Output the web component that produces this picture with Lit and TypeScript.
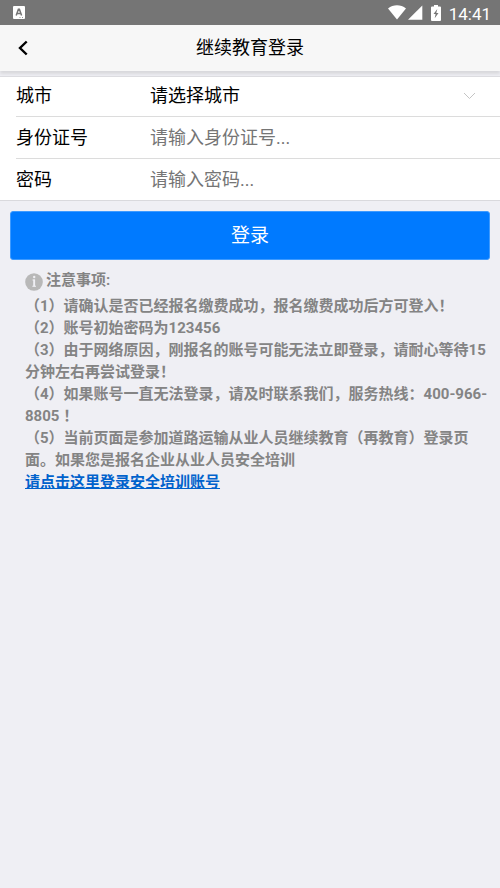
import { LitElement, html, css } from "lit";
import { customElement, state } from "lit/decorators.js";

@customElement("app-root")
export class AppRoot extends LitElement {
  static styles = css`
    :host {
      display: block;
      min-height: 100vh;
      background: #efeff4;
      color: #000;
      font-family: Roboto, "Noto Sans CJK SC", sans-serif;
      font-size: 18px;
      line-height: 22px;
    }
    .status {
      display: flex;
      align-items: center;
      justify-content: space-between;
      height: 25px;
      padding: 0 9px 0 13px;
      background: #757575;
      color: #fff;
    }
    .status svg {
      display: block;
    }
    .indicators {
      display: flex;
      align-items: center;
    }
    .battery {
      margin-left: 8px;
    }
    .time {
      margin-left: 8px;
      padding-top: 2px;
      font-size: 17px;
    }
    .bar {
      display: grid;
      grid-template-columns: 46px 1fr 46px;
      align-items: center;
      height: 46px;
      background: #f7f7f7;
      box-shadow: 0 3px 3px #d8d8dc;
    }
    .back {
      display: flex;
      justify-content: center;
      align-items: center;
      height: 46px;
      padding: 0;
      border: 0;
      background: none;
      color: #000;
    }
    .title {
      margin: 0;
      font-size: 18px;
      font-weight: 400;
      text-align: center;
    }
    .fields {
      position: relative;
      margin-top: 5px;
      border-top: 1px solid #dcdce0;
      border-bottom: 1px solid #d9d9dd;
      background: #fff;
    }
    .row {
      display: flex;
      align-items: center;
      height: 41px;
      margin-left: 16px;
    }
    .row + .row {
      border-top: 1px solid #dcdcdc;
    }
    .row:first-child {
      height: 37px;
      padding-bottom: 2px;
    }
    .label {
      width: 134px;
      flex: none;
    }
    .control {
      flex: 1;
      min-width: 0;
      height: 36px;
      margin: 0;
      padding: 0;
      border: 0;
      outline: 0;
      appearance: none;
      background: none;
      color: #000;
      font: inherit;
    }
    .control::placeholder {
      color: #757575;
      opacity: 1;
    }
    .arrow {
      flex: none;
      margin-right: 24px;
      pointer-events: none;
    }
    .submit {
      display: block;
      width: calc(100% - 20px);
      height: 49px;
      margin: 10px 10px 0;
      padding: 0 0 4px;
      border: 1px solid #3d9aff;
      border-radius: 3px;
      background: #007aff;
      color: #fff;
      font-family: inherit;
      font-size: 19px;
    }
    .notes {
      padding: 8px 10px 0 25px;
      color: #848484;
      font-size: 15px;
      font-weight: 700;
    }
    .heading {
      display: flex;
      align-items: center;
      gap: 3px;
      height: 24px;
      margin: 0;
      padding-bottom: 3px;
      font-size: 15px;
    }
    .info {
      flex: none;
      margin-top: 4px;
    }
    .notes p {
      margin: 0;
    }
    .link {
      color: #0062cc;
    }
  `;

  @state() private city = "";

  private notices = [
    "（1）请确认是否已经报名缴费成功，报名缴费成功后方可登入！",
    "（2）账号初始密码为123456",
    "（3）由于网络原因，刚报名的账号可能无法立即登录，请耐心等待15分钟左右再尝试登录！",
    "（4）如果账号一直无法登录，请及时联系我们，服务热线：400-966-8805 ！",
    "（5）当前页面是参加道路运输从业人员继续教育（再教育）登录页面。如果您是报名企业从业人员安全培训",
  ];

  render() {
    return html`
      <div class="status">
        <svg width="12" height="13" viewBox="0 0 12 13" aria-hidden="true">
          <rect width="12" height="13" rx="1" fill="#fff" />
          <path d="M3.200 9.500 5.400 3.200H6.400L8.600 9.500M4 7.400H7.800" fill="none" stroke="#757575" stroke-width="1.500" />
          <path d="M6.500 11.500h1M9 11.500h1" stroke="#999" />
        </svg>
        <div class="indicators">
          <svg width="35" height="15" viewBox="0 0 35 15" fill="#fff" aria-hidden="true">
            <path d="M0 3.400C5.200-.9 12.800-.9 18 3.400L9 14.500Z" />
            <path d="M34.300.5V14.800H20Z" />
          </svg>
          <svg class="battery" width="10" height="16" viewBox="0 0 10 16" aria-hidden="true">
            <path d="M3 0h4v1.500h2q1 0 1 1V15q0 1-1 1H1q-1 0-1-1V2.500q0-1 1-1h2Z" fill="#fff" />
            <path d="M6.300 4 2.500 9h2.100L3.700 13.200 7.500 8H5.300Z" fill="#757575" />
          </svg>
          <span class="time">14:41</span>
        </div>
      </div>
      <header class="bar">
        <button class="back" type="button" aria-label="返回">
          <svg width="10" height="16" viewBox="0 0 10 16" fill="none" stroke="currentColor" stroke-width="2.400" aria-hidden="true">
            <path d="M8.700 1.500 2 8l6.700 6.500" />
          </svg>
        </button>
        <h1 class="title">继续教育登录</h1>
      </header>
      <form @submit=${(e: Event) => e.preventDefault()}>
        <div class="fields">
          <div class="row">
            <label class="label" for="city">城市</label>
            <select
              class="control"
              id="city"
              .value=${this.city}
              @change=${(e: Event) => (this.city = (e.target as HTMLSelectElement).value)}
            >
              <option value="">请选择城市</option>
            </select>
            <svg class="arrow" width="13" height="8" viewBox="0 0 13 8" fill="none" stroke="#c4c4c4" aria-hidden="true">
              <path d="M1 1l5.500 5.500L12 1" />
            </svg>
          </div>
          <div class="row">
            <label class="label" for="idno">身份证号</label>
            <input class="control" id="idno" type="text" placeholder="请输入身份证号..." />
          </div>
          <div class="row">
            <label class="label" for="pwd">密码</label>
            <input class="control" id="pwd" type="password" placeholder="请输入密码..." />
          </div>
        </div>
        <button class="submit" type="submit">登录</button>
      </form>
      <section class="notes">
        <h2 class="heading">
          <svg class="info" width="18" height="18" viewBox="0 0 18 18" aria-hidden="true">
            <circle cx="9" cy="9" r="8.800" fill="#b8b8b8" />
            <path d="M7.500 7H9.200V13.200M7.300 13.200H11" fill="none" stroke="#efeff4" stroke-width="1.100" />
            <path d="M9.200 6.500V13.500" stroke="#efeff4" stroke-width="1.800" />
            <circle cx="9.200" cy="4" r="1.200" fill="#efeff4" />
          </svg>
          注意事项:
        </h2>
        ${this.notices.map((text) => html`<p>${text}</p>`)}
        <a class="link" href="#">请点击这里登录安全培训账号</a>
      </section>
    `;
  }
}
